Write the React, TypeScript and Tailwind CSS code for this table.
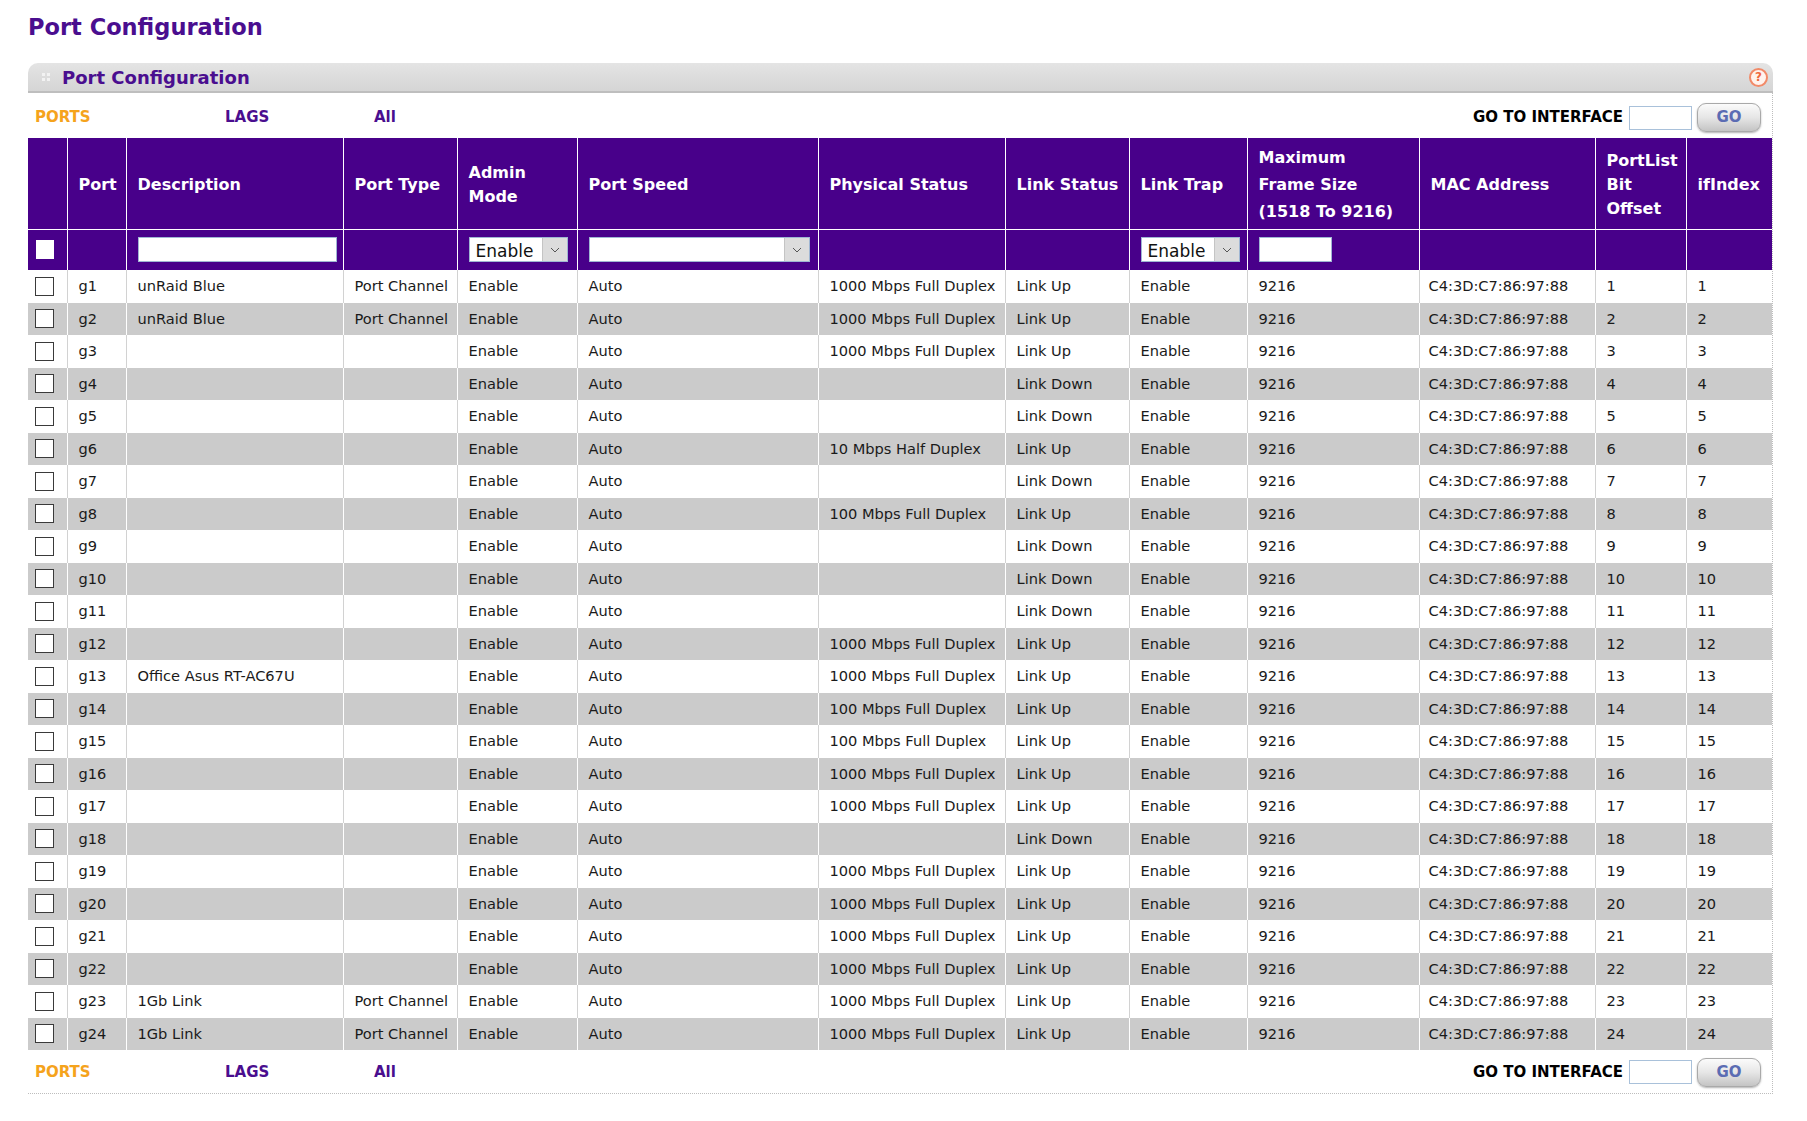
import React from 'react'

type Port = {
  port: string
  desc: string
  type: string
  phys: string
  link: string
}

const UP1000 = '1000 Mbps Full Duplex'
const UP100 = '100 Mbps Full Duplex'

const PORTS: Port[] = [
  { port: 'g1', desc: 'unRaid Blue', type: 'Port Channel', phys: UP1000, link: 'Link Up' },
  { port: 'g2', desc: 'unRaid Blue', type: 'Port Channel', phys: UP1000, link: 'Link Up' },
  { port: 'g3', desc: '', type: '', phys: UP1000, link: 'Link Up' },
  { port: 'g4', desc: '', type: '', phys: '', link: 'Link Down' },
  { port: 'g5', desc: '', type: '', phys: '', link: 'Link Down' },
  { port: 'g6', desc: '', type: '', phys: '10 Mbps Half Duplex', link: 'Link Up' },
  { port: 'g7', desc: '', type: '', phys: '', link: 'Link Down' },
  { port: 'g8', desc: '', type: '', phys: UP100, link: 'Link Up' },
  { port: 'g9', desc: '', type: '', phys: '', link: 'Link Down' },
  { port: 'g10', desc: '', type: '', phys: '', link: 'Link Down' },
  { port: 'g11', desc: '', type: '', phys: '', link: 'Link Down' },
  { port: 'g12', desc: '', type: '', phys: UP1000, link: 'Link Up' },
  { port: 'g13', desc: 'Office Asus RT-AC67U', type: '', phys: UP1000, link: 'Link Up' },
  { port: 'g14', desc: '', type: '', phys: UP100, link: 'Link Up' },
  { port: 'g15', desc: '', type: '', phys: UP100, link: 'Link Up' },
  { port: 'g16', desc: '', type: '', phys: UP1000, link: 'Link Up' },
  { port: 'g17', desc: '', type: '', phys: UP1000, link: 'Link Up' },
  { port: 'g18', desc: '', type: '', phys: '', link: 'Link Down' },
  { port: 'g19', desc: '', type: '', phys: UP1000, link: 'Link Up' },
  { port: 'g20', desc: '', type: '', phys: UP1000, link: 'Link Up' },
  { port: 'g21', desc: '', type: '', phys: UP1000, link: 'Link Up' },
  { port: 'g22', desc: '', type: '', phys: UP1000, link: 'Link Up' },
  { port: 'g23', desc: '1Gb Link', type: 'Port Channel', phys: UP1000, link: 'Link Up' },
  { port: 'g24', desc: '1Gb Link', type: 'Port Channel', phys: UP1000, link: 'Link Up' },
]

function Chevron() {
  return (
    <svg width="10" height="6" viewBox="0 0 10 6" fill="none">
      <path d="M1 1l4 4 4-4" stroke="#555" strokeWidth="1" />
    </svg>
  )
}

function FakeSelect({ value, width }: { value: string; width: string }) {
  return (
    <div className={`flex h-[25px] ${width} border border-[#9fb6d3] bg-white`}>
      <span className="flex-1 pl-[6px] pt-[1px] text-[17px] leading-[24px] text-[#111]">{value}</span>
      <span className="flex w-[25px] items-center justify-center border-l border-[#c4c4c4] bg-[#dcdcdc]">
        <Chevron />
      </span>
    </div>
  )
}

function TabsRow({ bottom }: { bottom?: boolean }) {
  return (
    <div className={`flex items-center ${bottom ? 'h-[43px] pt-[1px]' : 'h-[45px] pt-[4px]'}`}>
      <span className="w-[197px] pl-[7px] text-[15px] font-bold text-[#f5a31c]">PORTS</span>
      <span className="w-[149px] text-[15px] font-bold text-[#4a0e8f]">LAGS</span>
      <span className="text-[15px] font-bold text-[#4a0e8f]">All</span>
      <div className="ml-auto flex items-center pr-[11px]">
        <span className="text-[15px] font-bold text-black">GO TO INTERFACE</span>
        <span className="ml-[6px] h-[24px] w-[63px] border border-[#a9c1da] bg-white" />
        <button className="ml-[5px] h-[29px] w-[64px] rounded-[9px] border border-[#a9a9a9] bg-gradient-to-b from-[#fbfbfb] via-[#e6e6e6] to-[#c4c4c4] text-[15px] font-bold text-[#5b6cb3] shadow-[0_1px_2px_rgba(0,0,0,0.3)]">
          GO
        </button>
      </div>
    </div>
  )
}

const TH = 'border-r border-b border-white px-[11px] pt-[3px] text-left align-middle font-bold text-[16px] leading-[24px] text-white'
const TF = 'border-r border-white px-[11px] align-middle'

export default function App() {
  return (
    <div className="min-h-[1121px] bg-white font-['DejaVu_Sans',Verdana,sans-serif] text-[#1a1a1a]">
      <div className="ml-[28px] w-[1745px]">
        <h1 className="pt-[14px] text-[22.5px] font-bold leading-[26px] text-[#4a0e8f]">Port Configuration</h1>

        {/* panel header */}
        <div className="mt-[23px] flex h-[30px] items-center rounded-t-[10px] border-b-2 border-[#bebebe] bg-gradient-to-b from-[#e4e4e4] to-[#d5d5d5]">
          <span className="ml-[14px] grid grid-cols-2 gap-[2px]">
            <span className="h-[3px] w-[3px] bg-[#f2f2f2]" />
            <span className="h-[3px] w-[3px] bg-[#f2f2f2]" />
            <span className="h-[3px] w-[3px] bg-[#f2f2f2]" />
            <span className="h-[3px] w-[3px] bg-[#f2f2f2]" />
          </span>
          <span className="ml-[12px] text-[18px] font-bold text-[#4a0e8f]">Port Configuration</span>
          <span className="ml-auto mr-[5px] flex h-[19px] w-[19px] items-center justify-center rounded-full border-2 border-[#f28a68] bg-[#fff3ee] text-[12px] font-bold leading-none text-[#ef6a3c]">
            ?
          </span>
        </div>

        <div className="border-r border-b border-dotted border-[#bdbdbd]">
          <TabsRow />

          <table className="w-[1744px] table-fixed border-collapse">
            <colgroup>
              <col className="w-[39px]" />
              <col className="w-[59px]" />
              <col className="w-[217px]" />
              <col className="w-[114px]" />
              <col className="w-[120px]" />
              <col className="w-[241px]" />
              <col className="w-[187px]" />
              <col className="w-[124px]" />
              <col className="w-[118px]" />
              <col className="w-[172px]" />
              <col className="w-[176px]" />
              <col className="w-[91px]" />
              <col className="w-[86px]" />
            </colgroup>
            <thead className="bg-[#48008a]">
              <tr className="h-[91px]">
                <th className={TH}></th>
                <th className={TH}>Port</th>
                <th className={TH}>Description</th>
                <th className={TH}>Port Type</th>
                <th className={TH}>Admin<br />Mode</th>
                <th className={TH}>Port Speed</th>
                <th className={TH}>Physical Status</th>
                <th className={`${TH} whitespace-nowrap pr-0`}>Link Status</th>
                <th className={TH}>Link Trap</th>
                <th className={`${TH} leading-[27px]`}>Maximum<br />Frame Size<br />(1518 To 9216)</th>
                <th className={TH}>MAC Address</th>
                <th className={TH}>PortList<br />Bit<br />Offset</th>
                <th className={`${TH} border-r-0`}>ifIndex</th>
              </tr>
              <tr className="h-[41px]">
                <td className="border-r border-white pl-[8px] align-middle">
                  <div className="h-[19px] w-[18px] bg-white" />
                </td>
                <td className={TF}></td>
                <td className={TF}>
                  <div className="h-[25px] w-[199px] border border-[#9fb6d3] bg-white" />
                </td>
                <td className={TF}></td>
                <td className={TF}>
                  <FakeSelect value="Enable" width="w-[99px]" />
                </td>
                <td className={TF}>
                  <FakeSelect value="" width="w-[221px]" />
                </td>
                <td className={TF}></td>
                <td className={TF}></td>
                <td className={TF}>
                  <FakeSelect value="Enable" width="w-[99px]" />
                </td>
                <td className={TF}>
                  <div className="h-[25px] w-[73px] border border-[#9fb6d3] bg-white" />
                </td>
                <td className={TF}></td>
                <td className={TF}></td>
                <td className="align-middle"></td>
              </tr>
            </thead>
            <tbody className="text-[14.6px]">
              {PORTS.map((p, i) => {
                const n = String(i + 1)
                const row = i % 2 === 0 ? 'bg-white' : 'bg-[#cbcbcb]'
                const bd = i % 2 === 0 ? 'border-[#d2d2d2]' : 'border-white'
                const td = `h-[32.5px] border-r ${bd} px-[11px] whitespace-nowrap align-middle`
                return (
                  <tr key={p.port} className={row}>
                    <td className={`h-[32.5px] border-r ${bd} pl-[7px] align-middle`}>
                      <div className="h-[19px] w-[19px] border border-[#3a3a3a] bg-white" />
                    </td>
                    <td className={td}>{p.port}</td>
                    <td className={td}>{p.desc}</td>
                    <td className={`${td} pr-0`}>{p.type}</td>
                    <td className={td}>Enable</td>
                    <td className={td}>Auto</td>
                    <td className={`${td} pr-0`}>{p.phys}</td>
                    <td className={td}>{p.link}</td>
                    <td className={td}>Enable</td>
                    <td className={td}>9216</td>
                    <td className={`${td} pl-[9px] pr-0`}>C4:3D:C7:86:97:88</td>
                    <td className={td}>{n}</td>
                    <td className={`${td} border-r-0`}>{n}</td>
                  </tr>
                )
              })}
            </tbody>
          </table>

          <TabsRow bottom />
        </div>
      </div>
    </div>
  )
}
